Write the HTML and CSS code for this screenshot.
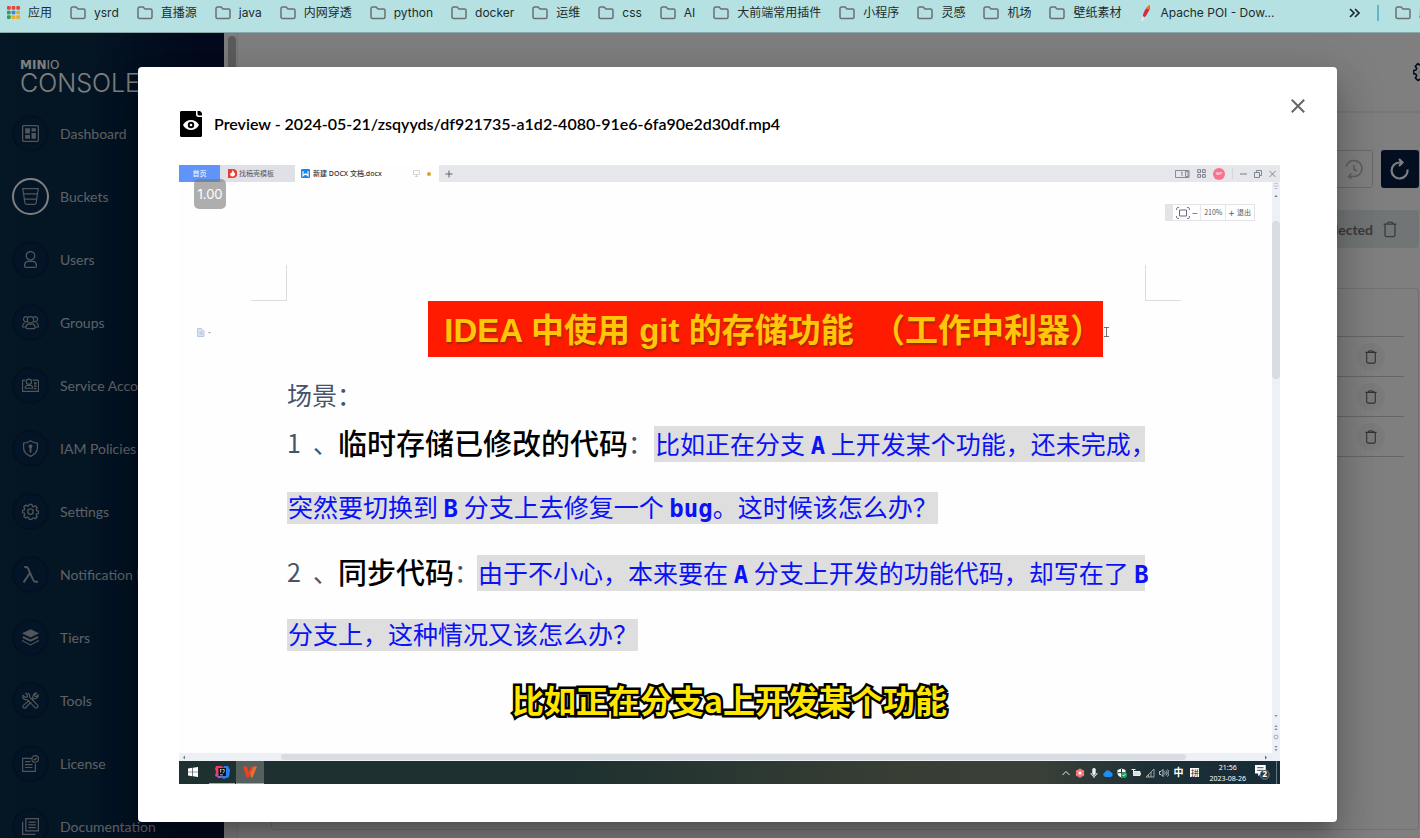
FILE: index.html
```html
<!DOCTYPE html>
<html lang="zh-CN">
<head>
<meta charset="utf-8">
<title>MinIO Console</title>
<link rel="stylesheet" href="styles.css">
</head>
<body>
<svg class="defs" aria-hidden="true">
  <symbol id="folder" viewBox="0 0 16 14"><path d="M2.5 1h3.6l1.9 2h5.5c.9 0 1.5.6 1.5 1.500v6.500c0 .9-.6 1.500-1.500 1.500h-11C1.600 12.500 1 11.900 1 11V2.500C1 1.600 1.600 1 2.500 1z" fill="none" stroke="#6b6f70" stroke-width="1.500"/></symbol>
  <symbol id="trash" viewBox="0 0 14 16"><path d="M.5 2.600h13M4 2.400C4 1 5 .7 7 .7s3 .3 3 1.700M2 3v10.500c0 1 .6 1.700 1.600 1.700h6.800c1 0 1.600-.7 1.600-1.700V3" fill="none" stroke="currentColor" stroke-width="1.300"/></symbol>
  <symbol id="gear" viewBox="0 0 24 24"><path d="M10 2h4l.6 2.700 1.700.7 2.400-1.500 2.800 2.800-1.500 2.400.7 1.700 2.700.6v3.400l-2.700.6-.7 1.700 1.500 2.400-2.800 2.800-2.400-1.500-1.700.7L14 23h-4l-.6-2.500-1.700-.7-2.400 1.500-2.800-2.800L4 16.100l-.7-1.700-2.600-.6v-3.400l2.600-.6L4 8.100 2.500 5.700l2.800-2.800 2.400 1.500 1.700-.7z" fill="none" stroke="currentColor" stroke-width="1.800" stroke-linejoin="round"/><circle cx="12" cy="12.200" r="3.800" fill="none" stroke="currentColor" stroke-width="1.800"/></symbol>
</svg>

<nav class="bookmarks" aria-label="书签">
  <a href="#"><svg width="13" height="13" viewBox="0 0 14 14"><g><rect x="0" y="0" width="4" height="4" rx="1" fill="#e5453a"/><rect x="5" y="0" width="4" height="4" rx="1" fill="#e5453a"/><rect x="10" y="0" width="4" height="4" rx="1" fill="#e5453a"/><rect x="0" y="5" width="4" height="4" rx="1" fill="#2f9e50"/><rect x="5" y="5" width="4" height="4" rx="1" fill="#3b82f0"/><rect x="10" y="5" width="4" height="4" rx="1" fill="#f2ab1c"/><rect x="0" y="10" width="4" height="4" rx="1" fill="#2f9e50"/><rect x="5" y="10" width="4" height="4" rx="1" fill="#f2ab1c"/><rect x="10" y="10" width="4" height="4" rx="1" fill="#f2ab1c"/></g></svg>应用</a>
  <a href="#"><svg class="folder"><use href="#folder"/></svg>ysrd</a>
  <a href="#"><svg class="folder"><use href="#folder"/></svg>直播源</a>
  <a href="#"><svg class="folder"><use href="#folder"/></svg>java</a>
  <a href="#"><svg class="folder"><use href="#folder"/></svg>内网穿透</a>
  <a href="#"><svg class="folder"><use href="#folder"/></svg>python</a>
  <a href="#"><svg class="folder"><use href="#folder"/></svg>docker</a>
  <a href="#"><svg class="folder"><use href="#folder"/></svg>运维</a>
  <a href="#"><svg class="folder"><use href="#folder"/></svg>css</a>
  <a href="#"><svg class="folder"><use href="#folder"/></svg>AI</a>
  <a href="#"><svg class="folder"><use href="#folder"/></svg>大前端常用插件</a>
  <a href="#"><svg class="folder"><use href="#folder"/></svg>小程序</a>
  <a href="#"><svg class="folder"><use href="#folder"/></svg>灵感</a>
  <a href="#"><svg class="folder"><use href="#folder"/></svg>机场</a>
  <a href="#"><svg class="folder"><use href="#folder"/></svg>壁纸素材</a>
  <a href="#"><svg width="13" height="16" viewBox="1 0 13 16"><path d="M11.500.2c1 1 .6 3-.4 5.300L8 11l-3 2c-.4-2 .2-5 2-8C8.500 2.500 10 .8 11.500.2z" fill="#d22c46"/><path d="M11.500.2c1 1 .6 3-.4 4L8 4C9 2 10 .8 11.500.2z" fill="#f0762b"/><path d="M5.500 11.500 4 16" stroke="#f4f4f4" stroke-width="1.200"/></svg>Apache POI - Dow...</a>
  <div class="bookmarks-end">
    <button type="button" aria-label="更多书签"><svg width="12" height="10" viewBox="0 0 12 10"><path d="m1 1 4 4-4 4M6 1l4 4-4 4" fill="none" stroke="#1c2a2c" stroke-width="1.700"/></svg></button>
    <span class="divider"></span>
    <a href="#"><svg class="folder"><use href="#folder"/></svg>所有书签</a>
  </div>
</nav>

<div class="app">
  <aside class="sidebar">
    <div class="logo"><b>MIN<i>IO</i></b><span>CONSOLE</span></div>
    <ul class="menu">
      <li><a href="#"><span class="dot"><svg viewBox="0 0 16 16"><rect x=".6" y=".6" width="14.800" height="14.800" rx="1" fill="none" stroke="currentColor" stroke-width="1.200"/><path d="M3 3h4.500v5H3zM9 3h4v3H9zM3 9.500h4.500V13H3zM9 7.500h4V13H9z" fill="currentColor"/></svg></span>Dashboard</a></li>
      <li><a href="#" class="active"><span class="dot"><svg viewBox="0 0 16 16"><path d="M.7.6h14.600l-2 13.300c-.1.900-.8 1.500-1.600 1.500H4.300c-.8 0-1.500-.6-1.600-1.500zM1.500 5.500h13M2.200 10.400h11.600" fill="none" stroke="currentColor" stroke-width="1.100"/></svg></span>Buckets</a></li>
      <li><a href="#"><span class="dot"><svg viewBox="0 0 16 16"><circle cx="8" cy="4.500" r="4" fill="none" stroke="currentColor" stroke-width="1.200"/><path d="M5 9.800h6c1.800.6 2.600 2 2.600 4.200 0 .9-.5 1.400-1.400 1.400H3.800c-.9 0-1.400-.5-1.400-1.400 0-2.200.8-3.600 2.600-4.200z" fill="none" stroke="currentColor" stroke-width="1.200"/></svg></span>Users</a></li>
      <li><a href="#"><span class="dot"><svg viewBox="0 0 16 16"><g fill="none" stroke="currentColor" stroke-width="1.100"><circle cx="8" cy="5.500" r="3"/><path d="M5.500 9.500h5c1.300.5 1.800 1.600 1.800 3 0 .8-.3 1.200-1 1.200H4.700c-.7 0-1-.4-1-1.200 0-1.400.5-2.500 1.800-3zM4.600 7.200A2.400 2.400 0 1 1 5.200 3M11.400 7.200A2.400 2.400 0 1 0 10.800 3M3.500 12.200H.7c-.3-2 .3-3.400 1.800-4M12.500 12.200h2.800c.3-2-.3-3.400-1.800-4"/></g></svg></span>Groups</a></li>
      <li><a href="#"><span class="dot"><svg viewBox="0 0 16 16"><g fill="none" stroke="currentColor" stroke-width="1.100"><path d="M3 3H1.500c-.6 0-1 .4-1 1v9.500h15V4c0-.6-.4-1-1-1H10"/><circle cx="6.500" cy="4.500" r="2.500"/><path d="M4.300 8h4.400c1.200.5 1.400 1.300 1.400 2.600H2.900C2.900 9.300 3.100 8.500 4.300 8z"/></g><path d="M11.300 5h2.400v2h-2.400zM11.300 8h2.400v1.300h-2.400zM11.300 10.300h2.400v1.300h-2.400z" fill="currentColor"/></svg></span>Service Accounts</a></li>
      <li><a href="#"><span class="dot"><svg viewBox="0 0 16 16"><path d="M8 .7c2 1.500 4 2.200 6.500 2.300v4.500c0 3.500-2.500 6-6.500 7.900-4-1.900-6.500-4.400-6.500-7.900V3C4 2.900 6 2.200 8 .7z" fill="none" stroke="currentColor" stroke-width="1.200"/><path d="M8 4a2 2 0 0 1 .9 3.700v3.700L8 12.200l-.9-.8V7.700A2 2 0 0 1 8 4z" fill="currentColor"/></svg></span>IAM Policies</a></li>
      <li><a href="#"><span class="dot"><svg><use href="#gear"/></svg></span>Settings</a></li>
      <li><a href="#"><span class="dot"><svg viewBox="0 0 16 16"><path d="M2.200.9h1.600c1 0 1.500.5 1.900 1.400l4.900 11c.4.900.9 1.500 1.900 1.500H15M7.600 6.300 1.500 15.400" fill="none" stroke="currentColor" stroke-width="1.800"/></svg></span>Notification Endpoints</a></li>
      <li><a href="#"><span class="dot"><svg viewBox="0 0 16 16"><path d="m8 .3 8 3.800-8 3.900-8-3.900z" fill="currentColor"/><path d="M.8 7.200 8 10.700l7.200-3.500M.8 10.400v.8L8 15l7.200-3.800v-.8M.8 7.900 8 11.500l7.200-3.600" fill="none" stroke="currentColor" stroke-width="1.100"/></svg></span>Tiers</a></li>
      <li><a href="#"><span class="dot"><svg viewBox="0 0 16 16"><g fill="none" stroke="currentColor" stroke-width="1.100" stroke-linejoin="round"><path d="m6.700 8-5.400 4.600a1.500 1.500 0 0 0 2.100 2.200L8.500 9.500M9.300 6.200l1-1C9.900 3 11.500.6 13.700.8l-1.900 2 .3 1.200 1.300.4 1.900-1.800c.4 2.200-1.900 4.200-4.300 3.700L9.400 7.800"/><path d="m.8 2.900 1.900 1.900h1.700l.6-.6V2.600L3.200.8M5.500 1C7 2 7.400 3.500 7 4.600l7.600 7.800a1.600 1.600 0 0 1-2.200 2.300L4.800 7.100C3.300 7.500 1.500 6.700.8 5.300V2.900"/></g></svg></span>Tools</a></li>
      <li><a href="#"><span class="dot"><svg viewBox="0 0 16 16"><g fill="none" stroke="currentColor" stroke-width="1.100"><path d="M9 3.200H.6v12.200h12V8M2.800 6.300H8M2.800 9h7M2.800 11.800h7"/><circle cx="12.400" cy="3.700" r="3.100"/><path d="m11 3.700 1 1 1.900-1.900"/></g></svg></span>License</a></li>
      <li><a href="#"><span class="dot"><svg viewBox="0 0 16 16"><path d="M3.600.6h11.800v11.600H3.600zM.6 3.500v11.900h12M6 3.800h7M6 6.400h7M6 9h7" fill="none" stroke="currentColor" stroke-width="1.200"/></svg></span>Documentation</a></li>
    </ul>
  </aside>
  <div class="scroll-track"><span></span></div>

  <main class="main">
    <header class="topbar"><button type="button" aria-label="设置"><svg width="22" height="22"><use href="#gear"/></svg></button></header>
    <div class="content">
      <div class="actions">
        <button type="button" class="outline" aria-label="回退"><svg width="20" height="20" viewBox="0 0 20 20"><path d="M2.200 7.500A8 8 0 1 1 10 17.500H5M7.500 14.500l-3 3 3 2M10 6v4.500l3 1.500" fill="none" stroke="currentColor" stroke-width="1.700"/></svg></button>
        <button type="button" class="solid" aria-label="刷新"><svg width="20" height="22" viewBox="0 0 20 22"><path d="M17.500 11.500A8 8 0 1 1 9.500 4.500h2.500M9 1l3.500 3.500L9 8" fill="none" stroke="currentColor" stroke-width="2.200"/></svg></button>
      </div>
      <div class="selection">Selected<svg width="14" height="17"><use href="#trash"/></svg></div>
      <section class="panel">
        <ul>
          <li><button type="button" aria-label="删除"><svg width="12" height="14"><use href="#trash"/></svg></button></li>
          <li><button type="button" aria-label="删除"><svg width="12" height="14"><use href="#trash"/></svg></button></li>
          <li><button type="button" aria-label="删除"><svg width="12" height="14"><use href="#trash"/></svg></button></li>
        </ul>
      </section>
    </div>
  </main>

  <div class="overlay">
    <div class="modal" role="dialog" aria-modal="true" aria-labelledby="preview-title">
      <button type="button" class="close" aria-label="关闭"><svg width="14" height="14" viewBox="0 0 14 14"><path d="m.8.8 12.400 12.400M13.200.8.8 13.200" stroke="#666" stroke-width="2"/></svg></button>
      <h1 id="preview-title"><svg width="22" height="26" viewBox="0 0 22 26"><path d="M1.500 0H16v3.500C16 5 17 6 18.500 6H22v18.500c0 .9-.6 1.500-1.500 1.500h-19C.6 26 0 25.400 0 24.500v-23C0 .6.6 0 1.500 0z"/><path d="M17.500 0H20l2 2v2.500h-3c-.9 0-1.500-.5-1.500-1.400z"/><path d="M3 14c3.500-6.600 12.500-6.600 16 0-3.500 6.600-12.500 6.600-16 0z" fill="#fff"/><circle cx="11" cy="14" r="3.200"/><circle cx="11" cy="14" r="1.300" fill="#fff"/></svg>Preview - 2024-05-21/zsqyyds/df921735-a1d2-4080-91e6-6fa90e2d30df.mp4</h1>

      <div class="video">
        <div class="speed">1.00</div>
        <div class="tabs">
          <span class="tab home">首页</span>
          <span class="tab store"><svg width="9" height="9" viewBox="0 0 9 9"><path d="M0 0h5a4.500 4.500 0 0 1 0 9H0z" fill="#ee3c35"/><path d="M4.500 1.300c1.800 1.500 1 2.500 2.600 2.700C7 6.600 6 7.500 4.500 7.500S2 6.600 2 4.500c1 .2 1.500 0 2.500-3.200z" fill="#fff"/></svg>找稿壳模板</span>
          <span class="tab doc"><svg width="9" height="9" viewBox="0 0 9 9"><rect width="9" height="9" rx="1" fill="#1486f5"/><path d="M2 2.300v4.400l2.500-2 2.500 2V2.300" fill="none" stroke="#fff" stroke-width="1.200"/></svg><b>新建 DOCX 文档.docx</b><svg class="screen" width="7" height="7" viewBox="0 0 7 7"><path d="M.5.5h6v4h-6zM2 6.500h3M3.500 4.500v2" fill="none" stroke="#c9ccd3" stroke-width=".8"/></svg><i></i></span>
          <svg class="plus" width="8" height="8" viewBox="0 0 8 8"><path d="M4 .5v7M.5 4h7" stroke="#5c5f74"/></svg>
          <div class="window-tools">
            <svg width="15" height="8" viewBox="0 0 15 8"><path d="M.5.500h13.500v7H.5zM10.500 1.500h2.500v5h-2.500zM6 2.500l1-.6v4.300" fill="none" stroke="#6f7285" stroke-width=".8"/></svg>
            <svg width="9" height="9" viewBox="0 0 9 9"><path d="M.7.700h2.800v2.800H.7zM5.500.7h2.800v2.800H5.500zM.7 5.500h2.800v2.800H.7zM5.500 5.500h2.800v2.800H5.500z" fill="none" stroke="#6f7285" stroke-width=".9"/></svg>
            <span class="avatar">WP</span>
            <span class="sep"></span>
            <svg width="7" height="8" viewBox="0 0 7 8"><path d="M0 4h7" stroke="#777b8c"/></svg>
            <svg width="8" height="8" viewBox="0 0 8 8"><path d="M.5 2.500h5v5h-5zM2.500 2.500v-2h5v5h-2" fill="none" stroke="#777b8c" stroke-width=".9"/></svg>
            <svg width="7" height="8" viewBox="0 0 7 8"><path d="m.5 1 6 6m0-6-6 6" stroke="#777b8c" stroke-width=".9"/></svg>
          </div>
        </div>

        <div class="stage">
          <article class="page">
            <div class="zoombar">
              <span class="grip"></span>
              <svg width="14" height="12" viewBox="0 0 14 12"><path d="M3.500 3h7v6h-7zM.6 3V1.500C.6 1 1 .6 1.500.6H3M11 .6h1.500c.5 0 .9.400.9.900V3M.6 9v1.500c0 .5.4.9.9.9H3M11 11.400h1.500c.5 0 .9-.4.9-.9V9" fill="none" stroke="#686b7a"/></svg>
              <span class="step">−</span><span class="level">210%</span><span class="step">+</span><span>退出</span>
            </div>
            <div class="corners"><span></span><span></span></div>
            <div class="title-row">
              <svg class="paste" width="16" height="9" viewBox="0 0 16 9"><path d="M1.500.500h4l2.500 2.500v5.500h-6.500z" fill="#d8e3f3" stroke="#a9bfdf" stroke-width=".8"/><path d="M3.500 4h3M3.500 6h3" stroke="#a9bfdf"/><path d="M12 4h3l-1.500 1.800z" fill="#aaa"/></svg>
              <h2>IDEA 中使用 git 的存储功能 &nbsp;（工作中利器）</h2>
              <svg class="ibeam" width="5" height="10" viewBox="0 0 5 10"><path d="M0 .5h5M0 9.500h5M2.500.5v9" stroke="#555" stroke-width=".8"/></svg>
            </div>
            <p class="scene">场景：</p>
            <p class="item first"><span class="num">1</span><span>、</span><strong>临时存储已修改的代码</strong><span class="colon">：</span><mark class="tall">比如正在分支 <b>A</b> 上开发某个功能，还未完成，</mark></p>
            <p class="second"><mark>突然要切换到 <b>B</b> 分支上去修复一个 <b>bug</b>。这时候该怎么办？</mark></p>
            <p class="item third"><span class="num">2</span><span>、</span><strong>同步代码</strong><span class="colon">：</span><mark class="tall">由于不小心，本来要在 <b>A</b> 分支上开发的功能代码，却写在了 <b>B</b></mark></p>
            <p class="fourth"><mark>分支上，这种情况又该怎么办？</mark></p>
            <p class="subtitle">比如正在分支a上开发某个功能</p>
          </article>
          <div class="vbar">
            <svg width="8" height="16" viewBox="0 0 8 16"><path d="M1.500 4h5M2.500 6.500h3M2 2l2-1 2 1" fill="none" stroke="#a6a9b3" stroke-width=".7"/><path d="m2.300 15 1.700-2 1.700 2z" fill="#777"/></svg>
            <span class="thumb"></span>
            <svg width="8" height="40" viewBox="0 0 8 40"><path d="M2.300 2h3.400L4 4zM2.300 14 4 12l1.700 2zM2.300 17 4 15l1.700 2zM2.300 33h3.400L4 35zM2.300 36h3.400L4 38z" fill="#8a8d98"/><circle cx="4" cy="24" r="2" fill="none" stroke="#8a8d98" stroke-width=".7"/></svg>
          </div>
        </div>
        <div class="hbar"><svg width="4" height="5" viewBox="0 0 4 5"><path d="M3 .5v4L1 2.500z" fill="#777"/></svg><span></span><svg width="4" height="5" viewBox="0 0 4 5"><path d="M1 .5v4l2-2z" fill="#666"/></svg></div>

        <div class="taskbar">
          <span class="task"><svg width="10" height="10" viewBox="0 0 10 10"><path d="m0 1.400 4.400-.6v3.900H0zM5 .7l5-.7v4.700H5zM0 5.300h4.400v3.900L0 8.600zM5 5.300h5V10l-5-.7z" fill="#fff"/></svg></span>
          <span class="task running"><svg width="15" height="14" viewBox="0 0 15 14"><path d="M1 1h6l2 3-7 8-2-1 1-4-1-3z" fill="#e83e63"/><path d="M9 1h4l2 4-1 7-5 2-4-2z" fill="#2b7df2"/><path d="M1 9h5v4H3z" fill="#a85bd0"/><rect x="3.500" y="3" width="7.500" height="8" fill="#111"/><path d="M5 4.500h1.500M5.700 4.500v3M7.500 4.500h1.700v2.200c0 .6-.6.9-1.500.8M5 9.800h3" stroke="#fff" stroke-width=".7" fill="none"/></svg></span>
          <span class="task running current"><svg width="14" height="12" viewBox="0 0 14 12"><path d="M0 .5h4l1.700 6L8 .5h2L5.500 11.500H3.500z" fill="#f2401f"/><path d="m7.200 7 3.500-6.500H14L9.500 11.500H7.800z" fill="#f26a2c"/></svg></span>
          <div class="tray">
            <svg viewBox="0 0 10 10"><path d="m1.500 7 3.500-3.500L8.500 7" fill="none" stroke="#eee"/></svg>
            <svg viewBox="0 0 10 10"><circle cx="5" cy="2.400" r="2" fill="#e77"/><circle cx="2.700" cy="3.800" r="2" fill="#e77"/><circle cx="7.300" cy="3.800" r="2" fill="#e77"/><circle cx="2.700" cy="6.500" r="2" fill="#e77"/><circle cx="7.300" cy="6.500" r="2" fill="#e77"/><circle cx="5" cy="7.700" r="2" fill="#e77"/><circle cx="5" cy="5" r="1.600" fill="#fff"/></svg>
            <svg viewBox="0 0 10 10"><rect x="3.300" width="3.400" height="7" rx="1.500" fill="#eee"/><path d="M2 5c0 4 6 4 6 0M5 8v2" fill="none" stroke="#eee"/></svg>
            <svg viewBox="0 0 10 10"><path d="M2.500 9A2.400 2.400 0 0 1 2 4.300 3 3 0 0 1 7.500 4 2.600 2.600 0 0 1 8 9z" fill="#1c8ff0"/></svg>
            <svg viewBox="0 0 10 10"><path d="m4.500.5 4 1.500v3c0 2-1.500 3.500-4 4.500C2 8.500.5 7 .5 5V2z" fill="#fff"/><path d="M4.500 1v8M1 4.700h7" stroke="#1f3231"/><circle cx="7" cy="7" r="3" fill="#1fa463"/><path d="m5.500 7 1 1 2-2" fill="none" stroke="#fff" stroke-width=".8"/></svg>
            <svg viewBox="0 0 10 10"><path d="M2.500 3.500H9v4H2.500zM9.500 5v1.500M.5 1.500h4M2.500 1.500v3" fill="#ddd" stroke="#eee"/></svg>
            <svg viewBox="0 0 10 10"><path d="M1 9 9 1v8zM3.500 9V6.500M6 9V4" fill="none" stroke="#aab2b1" stroke-width=".9"/></svg>
            <svg viewBox="0 0 10 10"><path d="M.5 3.500H2L4 1.500v7l-2-2H.5zM5.500 3.500c.8 1 .8 2 0 3M7 2.500c1.500 1.700 1.500 3.400 0 5M8.500 1.500c2 2.500 2 4.500 0 7" fill="none" stroke="#e5e8e8" stroke-width=".8"/></svg>
            <span class="ime">中</span>
            <span class="pinyin">拼</span>
            <time>21:56<br>2023-08-26</time>
            <svg class="notice" viewBox="0 0 14 14"><path d="M0 0h10v8H6l-3 2.500V8H0z" fill="#fff"/><path d="M2 2.500h6M2 5h6" stroke="#1f3231" stroke-width=".8"/><circle cx="9" cy="9" r="4.300" fill="#26363a" stroke="#a5adae" stroke-width=".6"/><text x="9" y="11.500" text-anchor="middle">2</text></svg>
          </div>
        </div>
      </div>
    </div>
  </div>
</div>
</body>
</html>
```
FILE: styles.css
```css
* { box-sizing: border-box; }
body {
  margin: 0;
  height: 100vh;
  overflow: hidden;
  display: flex;
  flex-direction: column;
  font-family: Lato, "Noto Sans CJK SC", sans-serif;
  background: #fff;
}
button { border: 0; padding: 0; background: none; color: inherit; font: inherit; display: flex; align-items: center; justify-content: center; }
a { color: inherit; text-decoration: none; }
ul { list-style: none; margin: 0; padding: 0; }
p, h1, h2 { margin: 0; }
svg { flex: none; display: block; }
.defs { position: absolute; width: 0; height: 0; }

/* bookmarks bar */
.bookmarks {
  flex: none;
  height: 33px;
  padding: 0 0 7px 7px;
  display: flex;
  gap: 18px;
  background: #b5e1e2;
  border-bottom: 1px solid #8aa9aa;
  font: 12px/25px Inter, "Noto Sans CJK SC", sans-serif;
  color: #202c2e;
  white-space: nowrap;
  overflow: hidden;
}
.bookmarks a { flex: none; display: flex; align-items: center; gap: 8px; }
.folder { width: 16px; height: 14px; }
.bookmarks-end { flex: none; width: 71px; margin-left: auto; display: flex; align-items: center; gap: 16px; }
.divider { flex: none; width: 2px; height: 16px; background: #5bbcc4; }

/* application */
.app { flex: 1; min-height: 0; width: calc(100% + 55px); position: relative; display: flex; overflow: hidden; }
.sidebar { flex: none; width: 224px; background: linear-gradient(90deg, #082e4a 0%, #082a48 40%, #07143a 90%); }
.logo { padding: 25px 0 0 20px; height: 69px; color: #fff; display: flex; flex-direction: column; }
.logo b { font: 700 12px/14px "DejaVu Sans", sans-serif; }
.logo i { font-style: normal; font-weight: 400; }
.logo span { font: 300 25px/22px Inter, sans-serif; }
.menu a { height: 63px; padding-left: 12px; display: flex; align-items: center; gap: 11px; font-size: 14px; color: #bcc2c8; white-space: nowrap; }
.dot { flex: none; width: 37px; height: 37px; border-radius: 50%; border: 2px solid #04213f; background: #05284a; display: flex; align-items: center; justify-content: center; color: #a5adb5; }
.dot svg { width: 17px; height: 17px; }
.active .dot { border-color: #fff; }
.scroll-track { flex: none; width: 14px; padding: 3px 2px 0 4px; background: #fafafa; border-right: 1px solid #ececec; }
.scroll-track span { display: block; width: 8px; height: 70%; border-radius: 4px; background: #b8b8b8; }
.main { flex: 1; min-width: 0; display: flex; flex-direction: column; }
.topbar { flex: none; height: 80px; padding-right: 40px; display: flex; align-items: center; justify-content: flex-end; border-bottom: 2px solid #eee; color: #081c42; }
.content { flex: 1; padding: 37px 56px 8px 33px; display: flex; flex-direction: column; }
.actions { display: flex; justify-content: flex-end; gap: 8px; }
.actions button { width: 38px; height: 38px; border-radius: 3px; }
.actions .outline { border: 1px solid #d4d4d4; color: #bdbdbd; }
.actions .solid { background: #081c42; color: #fff; }
.selection { height: 38px; margin-top: 22px; padding-right: 22px; border-radius: 3px; background: #e5eaec; color: #777; font-size: 14px; font-weight: 700; display: flex; align-items: center; justify-content: flex-end; gap: 10px; }
.panel { flex: 1; margin-top: 40px; padding: 47px 14px 0; border: 1px solid #e2e2e2; border-radius: 3px; }
.panel ul { border-top: 1px solid #ccc; }
.panel li { height: 40px; padding-right: 19px; border-bottom: 1px solid #ccc; display: flex; align-items: center; justify-content: flex-end; }
.panel button { width: 28px; height: 28px; border-radius: 50%; background: #f6f6f6; color: #666; }

/* dialog */
.overlay { position: absolute; inset: 0; padding-top: 34px; background: rgba(0, 0, 0, .5); }
.modal {
  position: relative;
  width: calc(100% - 276px);
  margin: 0 auto;
  padding: 44px 57px 38px 41px;
  background: #fff;
  border-radius: 4px;
  box-shadow: 0 11px 15px -7px rgba(0, 0, 0, .2), 0 24px 38px 3px rgba(0, 0, 0, .14), 0 9px 46px 8px rgba(0, 0, 0, .12);
}
.close { position: absolute; top: 32px; right: 32px; }
.modal h1 { height: 26px; margin-bottom: 28px; padding-left: 1px; display: flex; align-items: center; gap: 12px; font-size: 16px; line-height: 26px; font-weight: 600; }

/* video frame */
.video { position: relative; aspect-ratio: 16 / 9; display: flex; flex-direction: column; background: #fefefe; font-family: "Noto Sans", "Noto Sans CJK SC", sans-serif; }
.speed { position: absolute; top: 14px; left: 15px; width: 32px; height: 30px; border-radius: 5px; background: rgba(120, 120, 120, .6); color: #fff; font: 13px/30px Inter, sans-serif; text-align: center; }
.tabs { flex: none; height: 17px; display: flex; align-items: center; background: #e6e7ea; font-size: 7px; line-height: 17px; color: #555865; white-space: nowrap; }
.tab { height: 17px; display: flex; align-items: center; gap: 2px; }
.home { width: 41px; justify-content: center; background: #6094fb; color: #fff; }
.store { width: 75px; padding-left: 8px; background: #e0e1e6; }
.doc { width: 144px; padding-left: 6px; gap: 3px; background: #fefefe; color: #333; }
.doc b { font-weight: 500; }
.screen { margin-left: auto; }
.doc i { width: 4px; height: 4px; margin: 0 8px 0 4px; border-radius: 50%; background: #e0a030; }
.plus { margin-left: 6px; }
.window-tools { margin-left: auto; padding-right: 4px; display: flex; align-items: center; gap: 7px; }
.avatar { width: 12px; height: 12px; border-radius: 50%; background: #fb7190; color: #fff; font-size: 4px; line-height: 12px; text-align: center; }
.sep { width: 1px; height: 11px; background: #d5d6da; }
.stage { flex: 1; min-height: 0; display: flex; }
.page { flex: 1; min-width: 0; padding-top: 22px; font-size: 25px; line-height: 28px; color: #44546a; white-space: nowrap; font-family: "Noto Sans CJK SC", sans-serif; font-weight: 400; }
.zoombar { width: 90px; height: 17px; margin: 0 17px 0 auto; display: flex; align-items: center; justify-content: space-between; border: 1px solid #e3e4e7; padding-right: 3px; font-size: 7px; line-height: 15px; color: #555865; }
.grip { width: 7px; height: 15px; background: #e3e4e7; }
.step { font-size: 10px; }
.level { padding: 0 3px; border: solid #e8e8ea; border-width: 0 1px; }
.corners { height: 36px; margin: 44px 91px 0 72px; display: flex; justify-content: space-between; }
.corners span { width: 36px; border: solid #dcdcdc; border-width: 0 1px 1px 0; }
.corners span + span { border-width: 0 0 1px 1px; }
.title-row { display: flex; align-items: center; padding: 0 163px 0 17px; }
.title-row h2 { height: 56px; margin-left: auto; padding-left: 16px; background: #ff1b00; color: #ffc60a; font: bold 33px/60px "Liberation Sans", "Noto Sans CJK SC", sans-serif; text-shadow: 1px 2px 2px rgba(90, 50, 0, .55); }
.ibeam { margin: 6px 0 0 1px; }
.paste { margin-top: 6px; }
.scene { height: 36px; margin: 21px 0 0 108px; line-height: 32px; }
.item { display: flex; align-items: center; height: 36px; margin: 0 127px 0 108px; line-height: 32px; }
.item > span, .item strong { height: 36px; }
.num { width: 14px; margin-right: 12px; }
.item strong { font-size: 29px; font-weight: 500; color: #000; }
.colon { width: 26px; }
.third .colon { width: 23px; }
.item.first { margin-top: 12px; }
.second { margin: 30px 0 0 108px; }
.item.third { margin-top: 31px; }
.fourth { margin: 28px 0 0 108px; }
mark { display: inline-block; height: 32px; padding-left: 1px; background: #dedede; color: #0b12f5; vertical-align: top; }
mark.tall { flex: 1; min-width: 0; height: 36px; line-height: 34px; }
mark b { font-family: "DejaVu Sans Mono", monospace; font-weight: 700; font-size: 24px; line-height: 24px; }
.subtitle { margin-top: 28px; padding-left: 8px; text-align: center; font-size: 32px; line-height: 40px; font-weight: 700; color: #ffe600; -webkit-text-stroke: 5px #000; paint-order: stroke fill; stroke-linejoin: round; }
.vbar { flex: none; width: 8px; display: flex; flex-direction: column; background: #edf0f7; }
.thumb { height: 158px; margin: 23px 0 auto; border-radius: 4px; background: #dadce3; }
.hbar { flex: none; height: 8px; padding: 0 12px 0 3px; display: flex; align-items: center; background: #edf0f5; }
.hbar span { flex: 1; height: 6px; margin: 0 78px 0 95px; border-radius: 3px; background: #dadce3; }
.taskbar { flex: none; height: 23px; padding-right: 3px; display: flex; background: linear-gradient(90deg, #203031 0%, #1d302f 35%, #383e34 65%, #3a4038 78%, #1e3036 88%, #152b38 100%); }
.task { width: 28px; display: flex; align-items: center; justify-content: center; border-bottom: 1px solid transparent; }
.task.running { margin-left: 2px; width: 26px; border-color: #76b5f0; }
.task.current { margin-left: 1px; width: 28px; background: #53605e; }
.tray { margin-left: auto; padding-right: 6px; display: flex; align-items: center; gap: 4px; border-right: 1px solid #66777c; color: #fff; font-size: 7px; line-height: 11px; }
.tray svg { width: 10px; height: 10px; }
.ime { font-size: 10px; font-weight: 700; }
.pinyin { width: 9px; height: 9px; margin: 0 6px 0 3px; background: #fff; color: #223; font-size: 8px; line-height: 9px; text-align: center; }
.tray time { text-align: center; margin-right: 5px; }
.tray .notice { width: 15px; height: 15px; }
.notice text { font-size: 8px; font-weight: 700; fill: #fff; }
```
